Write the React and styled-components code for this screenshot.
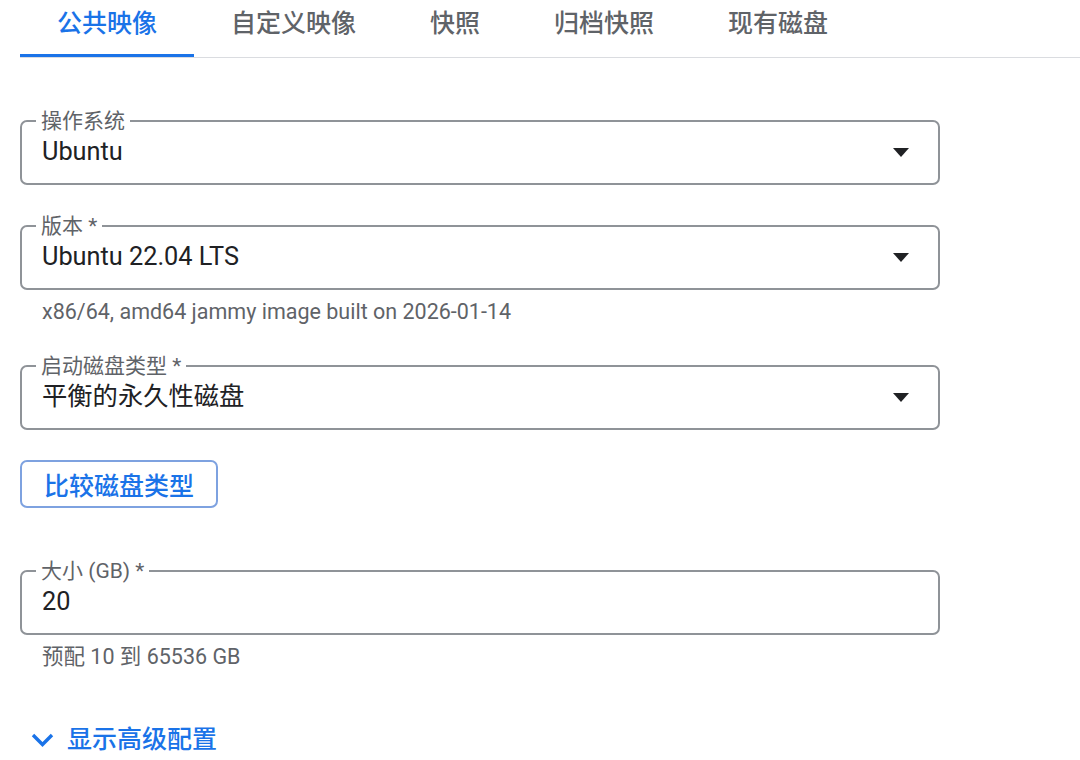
import React from 'react'
import styled, { createGlobalStyle } from 'styled-components'

const GlobalStyle = createGlobalStyle`
  body {
    margin: 0;
    background: #fff;
    font-family: Roboto, "Noto Sans CJK SC", sans-serif;
    color: #202124;
  }
`;

const Page = styled.div`
  padding: 0 0 0 20px;
`;

const TabBar = styled.div`
  display: flex;
  border-bottom: 1.5px solid #dadce0;
  height: 57px;
`;

const Tab = styled.div`
  padding: 0 37px;
  font-size: 25px;
  font-weight: 500;
  line-height: 47px;
  color: ${p => (p.active ? '#1a73e8' : '#5f6368')};
  border-bottom: 3px solid ${p => (p.active ? '#1a73e8' : 'transparent')};
  margin-bottom: -1px;
  box-sizing: border-box;
  height: 57px;
`;

const Form = styled.div`
  width: 920px;
  padding-top: 51px;
  display: flex;
  flex-direction: column;
`;

const Field = styled.fieldset`
  margin: ${p => p.gap || 0}px 0 0;
  padding: 4px 20px 16px 20px;
  border: 2px solid #8f9398;
  border-radius: 7px;
  min-width: 0;
`;

const Legend = styled.legend`
  margin-left: -6px;
  padding: 0 5px;
  font-size: 21px;
  line-height: 24px;
  color: #5f6368;
`;

const ValueRow = styled.div`
  display: flex;
  align-items: center;
  justify-content: space-between;
  font-size: 25.3px;
  line-height: 30px;
  color: #202124;
`;

const Arrow = styled.span`
  width: 0;
  height: 0;
  border-left: 8px solid transparent;
  border-right: 8px solid transparent;
  border-top: 9px solid #202124;
  margin-right: 9px;
`;

const Hint = styled.div`
  margin-top: ${p => p.gap}px;
  padding-left: 22px;
  font-size: 21.5px;
  line-height: 24px;
  color: #5f6368;
`;

const OutlineButton = styled.button`
  align-self: flex-start;
  margin-top: 30px;
  height: 48px;
  box-sizing: border-box;
  padding: 0 22px;
  background: #fff;
  border: 2px solid #7ea2e0;
  border-radius: 7px;
  color: #1a73e8;
  font-family: inherit;
  font-size: 25px;
  font-weight: 500;
`;

const Advanced = styled.div`
  display: flex;
  align-items: center;
  gap: 13px;
  margin-top: 56px;
  padding-left: 11px;
  color: #1a73e8;
  font-size: 25px;
  font-weight: 500;
  line-height: 30px;
`;

const Select = ({ label, value, gap }) => (
  <Field gap={gap}>
    <Legend>{label}</Legend>
    <ValueRow>
      {value}
      <Arrow />
    </ValueRow>
  </Field>
);

const tabs = ['公共映像', '自定义映像', '快照', '归档快照', '现有磁盘'];

const App = () => {
  return (
    <Page>
      <GlobalStyle />
      <TabBar>
        {tabs.map((t, i) => (
          <Tab key={t} active={i === 0}>{t}</Tab>
        ))}
      </TabBar>
      <Form>
        <Select label="操作系统" value="Ubuntu" />
        <Select label="版本 *" value="Ubuntu 22.04 LTS" gap={29} />
        <Hint gap={10}>x86/64, amd64 jammy image built on 2026-01-14</Hint>
        <Select label="启动磁盘类型 *" value="平衡的永久性磁盘" gap={30} />
        <OutlineButton>比较磁盘类型</OutlineButton>
        <Field gap={51}>
          <Legend>大小 (GB) *</Legend>
          <ValueRow>20</ValueRow>
        </Field>
        <Hint gap={10}>预配 10 到 65536 GB</Hint>
        <Advanced>
          <svg width="23" height="14" viewBox="0 0 23 14">
            <path d="M2 2l9.5 9.5 9.5-9.5" fill="none" stroke="#1a73e8" strokeWidth="3.4" />
          </svg>
          显示高级配置
        </Advanced>
      </Form>
    </Page>
  )
}

export default App
